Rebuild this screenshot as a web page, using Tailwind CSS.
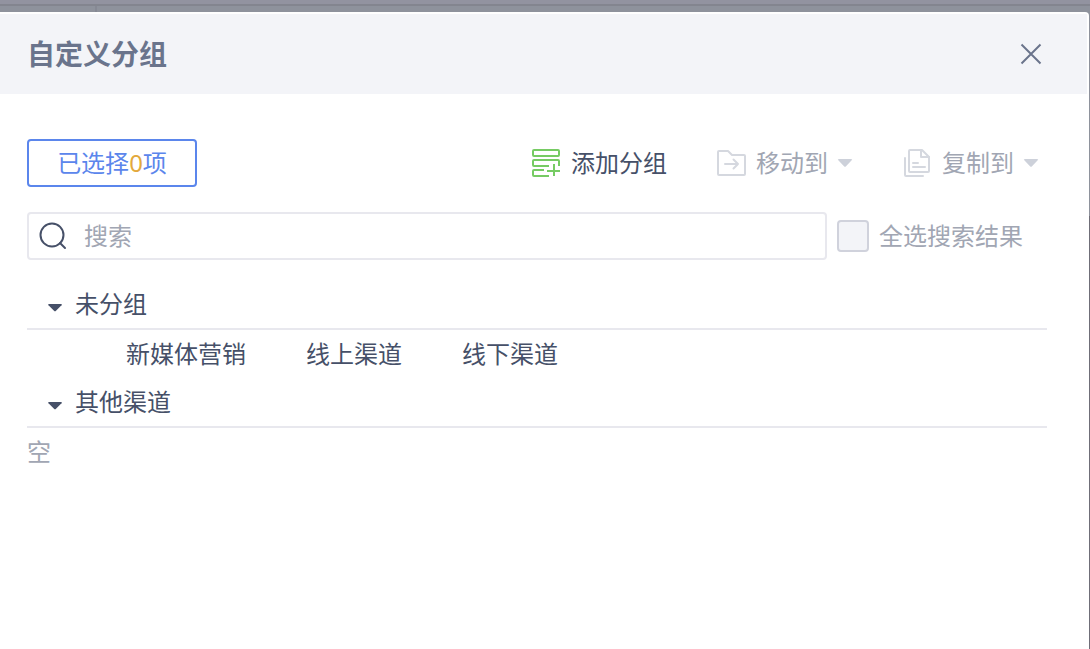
<!DOCTYPE html>
<html lang="zh-CN">
<head>
  <meta charset="UTF-8" />
  <meta name="viewport" content="width=device-width, initial-scale=1.0"/>
  <title>自定义分组</title>
  <script src="https://cdn.jsdelivr.net/npm/@tailwindcss/browser@4"></script>
</head>
<body class="min-h-screen flex flex-col font-['Noto_Sans','Noto_Sans_CJK_SC',sans-serif] text-2xl text-[#465068]">

  <!-- Dimmed page behind the dialog -->
  <div class="h-3 flex flex-col bg-[#9293a0]">
    <div class="mt-1 h-0.5 bg-[#83858f]"></div>
    <div class="flex-1 flex bg-[#8e929c]"><div class="ml-[95px] w-0.5 bg-[#868994]"></div></div>
  </div>

  <div class="flex-1 flex flex-col bg-linear-to-b from-[#8e929c] from-32% to-[#6f6e78] to-32%">
    <section role="dialog" aria-labelledby="title" class="flex-1 mr-px bg-white rounded-tr">

      <!-- Header -->
      <header class="mt-0.5 mr-0.5 h-20 pl-[27px] pr-11 flex items-center justify-between bg-[#f3f4f8]">
        <h1 id="title" class="text-[28px] leading-10 font-bold text-[#6a748c]">自定义分组</h1>
        <button type="button" aria-label="关闭" class="text-[#6a748c]">
          <svg class="w-6 h-6" viewBox="0 0 24 24" fill="none" stroke="currentColor" stroke-width="2"><path d="M2.5 2.5l19 19M21.5 2.5l-19 19"/></svg>
        </button>
      </header>

      <main class="pt-[45px] pl-[27px] pr-[42px]">

        <!-- Toolbar -->
        <div class="h-12 flex items-center justify-between">
          <button type="button" class="h-12 w-[170px] border-2 border-[#5b86ec] rounded text-[#5b86ec]">已选择<span class="text-[#e3a93c]">0</span>项</button>
          <div class="flex items-center gap-12 pr-2">
            <button type="button" class="flex items-center gap-[9px]">
              <svg class="w-8 h-8 text-[#76cb63]" viewBox="0 0 32 32" fill="none" stroke="currentColor" stroke-width="2">
                <rect x="3" y="3" width="26" height="6" rx="1"/>
                <path d="M29 19v-5a1 1 0 0 0-1-1H4a1 1 0 0 0-1 1v4a1 1 0 0 0 1 1h15"/>
                <path d="M14 23H4a1 1 0 0 0-1 1v4a1 1 0 0 0 1 1h15M17 24h13M24 17v12"/>
              </svg>
              添加分组
            </button>
            <button type="button" disabled class="flex items-center gap-[9px] text-[#a1a6b3]">
              <svg class="w-8 h-8 text-[#d5d8df]" viewBox="0 0 32 32" fill="none" stroke="currentColor" stroke-width="2" stroke-linejoin="round" stroke-linecap="round">
                <path d="M3 5a1 1 0 0 1 1-1h9l4 4h12a1 1 0 0 1 1 1v18a1 1 0 0 1-1 1H4a1 1 0 0 1-1-1z"/>
                <path d="M10 17h13M18.500 12.500l4.500 4.500-4.500 4.500"/>
              </svg>
              移动到
              <svg class="w-4 h-2" viewBox="0 0 16 8" fill="#cdd1da"><path d="M2 0h12q2 0 .7 1.300L9 7.300q-1 1-2 0L1.300 1.300Q0 0 2 0z"/></svg>
            </button>
            <button type="button" disabled class="flex items-center gap-[9px] text-[#a1a6b3]">
              <svg class="w-8 h-8 text-[#d5d8df]" viewBox="0 0 32 32" fill="none" stroke="currentColor" stroke-width="2" stroke-linejoin="round" stroke-linecap="round">
                <path d="M8 4a1 1 0 0 1 1-1h12l7 7v14a1 1 0 0 1-1 1H9a1 1 0 0 1-1-1z"/>
                <path d="M20 3v7h8M12 16h5M12 20h12M4 11v17a1 1 0 0 0 1 1h17"/>
              </svg>
              复制到
              <svg class="w-4 h-2" viewBox="0 0 16 8" fill="#cdd1da"><path d="M2 0h12q2 0 .7 1.300L9 7.300q-1 1-2 0L1.300 1.300Q0 0 2 0z"/></svg>
            </button>
          </div>
        </div>

        <!-- Search -->
        <div class="mt-[25px] flex items-center gap-2.5 pr-6">
          <label class="flex-1 h-12 pl-2 flex items-center gap-[15px] border-2 border-[#e8e8ee] rounded">
            <svg class="w-8 h-8" viewBox="0 0 32 32" fill="none" stroke="currentColor" stroke-width="2" stroke-linecap="round"><circle cx="15" cy="15" r="11.500"/><path d="M23 23l5 5"/></svg>
            <input type="text" aria-label="搜索" placeholder="搜索" class="flex-1 min-w-0 outline-none placeholder:text-[#a1a6b3]"/>
          </label>
          <label class="flex items-center gap-2.5 text-[#a1a6b3]">
            <input type="checkbox" class="appearance-none w-8 h-8 border-2 border-[#d0d2dc] rounded bg-[#f3f4f8]"/>
            全选搜索结果
          </label>
        </div>

        <!-- Groups -->
        <div class="mt-5">
          <button type="button" class="w-full h-[50px] pl-5 flex items-center gap-3 border-b-2 border-[#e8e8ee]">
            <svg class="w-4 h-4" viewBox="0 0 16 16" fill="currentColor"><path d="M2 8h12q1.500 0 .5 1.200L9 14.800q-1 1-2 0L1.500 9.200Q.5 8 2 8z"/></svg>
            未分组
          </button>
          <ul class="h-12 pl-[99px] flex items-center gap-[60px]">
            <li>新媒体营销</li>
            <li>线上渠道</li>
            <li>线下渠道</li>
          </ul>
          <button type="button" class="w-full h-[50px] pl-5 flex items-center gap-3 border-b-2 border-[#e8e8ee]">
            <svg class="w-4 h-4" viewBox="0 0 16 16" fill="currentColor"><path d="M2 8h12q1.500 0 .5 1.200L9 14.800q-1 1-2 0L1.500 9.200Q.5 8 2 8z"/></svg>
            其他渠道
          </button>
          <p class="h-12 flex items-center text-[#a1a6b3]">空</p>
        </div>
      </main>
    </section>
  </div>
</body>
</html>
